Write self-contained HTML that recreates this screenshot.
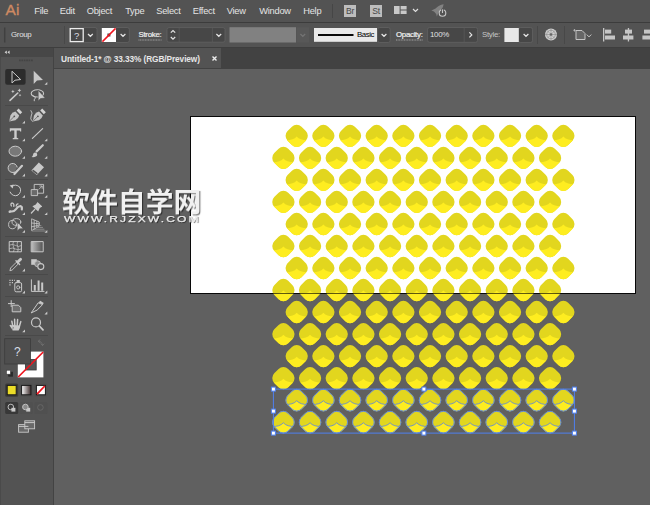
<!DOCTYPE html>
<html lang="en"><head><meta charset="utf-8"><title>Untitled-1* @ 33.33% (RGB/Preview)</title>
<style>
html,body{margin:0;padding:0}
body{width:650px;height:505px;overflow:hidden;background:#606060;position:relative;
 font-family:"Liberation Sans","Noto Sans CJK SC",sans-serif;font-size:9px;color:#dcdcdc;line-height:1}
.abs,#menubar *,#ctrl *,#tabs *,#tools *{position:absolute;box-sizing:border-box}
#menubar{position:absolute;left:0;top:0;width:650px;height:23px;background:#535353;border-bottom:1px solid #3c3c3c;box-sizing:border-box}
#menubar .m{top:7.2px;font-size:9.3px;color:#e4e4e4;white-space:nowrap;letter-spacing:-0.25px;margin-left:-0.8px}
#logo{left:5.6px;top:1.6px;font-size:15.4px;color:#cf8a62;letter-spacing:0.2px;-webkit-text-stroke:0.35px #cf8a62}
.box{background:#bdbdbd;color:#474747;font-size:8.6px;text-align:center;line-height:12px;width:12px;height:12px;letter-spacing:-0.3px}
#ctrl{position:absolute;left:0;top:23px;width:650px;height:25px;background:#535353;border-bottom:1px solid #3e3e3e;box-sizing:border-box}
#ctrl .t{font-size:7.9px;color:#e0e0e0;white-space:nowrap;letter-spacing:-0.3px}
#ctrl .dd{top:5px;height:15px;width:12px;background:#4a4a4a;border:1px solid #5c5c5c;border-radius:2px}
.sep{width:1px;background:#464646}
#tabs{position:absolute;left:0;top:48px;width:650px;height:21px;background:#424242}
#tab{left:54px;top:0;width:167px;height:20px;background:#535353}
#tab span{left:7px;top:7px;font-size:8.3px;letter-spacing:-0.1px;font-weight:bold;color:#e6e6e6;white-space:nowrap}
#tools{position:absolute;left:0;top:48px;width:54px;height:457px;background:#535353;border-right:1.6px solid #434343;border-left:1px solid #4a4a4a;box-sizing:border-box}
#tools .hd{left:-1px;top:0;width:53px;height:9px;background:#474747}
#canvas{position:absolute;left:54px;top:69px;width:596px;height:436px;background:#606060}
#art{position:absolute;left:190px;top:116px;width:446px;height:178px;background:#fff;border:1px solid #1a1a1a;box-sizing:border-box}
#wm{position:absolute;left:61.6px;top:189.8px;font-size:27.9px;font-weight:700;color:#f1f1f1;will-change:transform;white-space:nowrap;letter-spacing:0;text-shadow:1px 1px 1px rgba(0,0,0,.6);line-height:28px;transform-origin:0 0;transform:scale(1,0.97)}
#wm2{will-change:transform;position:absolute;left:64px;top:214.3px;font-size:8.6px;color:#ececec;white-space:nowrap;letter-spacing:1.52px;-webkit-text-stroke:0.25px #ececec;text-shadow:0.7px 1px 0.8px rgba(0,0,0,.6);line-height:10px;transform-origin:0 0;transform:scale(1.4,1)}
svg{position:absolute;left:0;top:0;overflow:visible}
</style></head>
<body>
<div id="canvas"></div>
<div id="art"></div>
<svg id="shapes" width="650" height="505" viewBox="0 0 650 505">
<defs>
<clipPath id="cp"><rect x="-9.9" y="-9.9" width="19.8" height="19.8" rx="6.8" transform="scale(0.995,1) rotate(45)"/></clipPath>
<g id="d">
 <rect x="-9.9" y="-9.9" width="19.8" height="19.8" rx="6.8" transform="scale(0.995,1) rotate(45)" fill="#e2d61e"/>
 <path clip-path="url(#cp)" d="M-12 4.3 Q-3.6 4.7 0 0.6 Q3.6 4.7 12 4.3 L12 12 L-12 12Z" fill="#feed20"/>
</g>
<g id="ds">
 <use href="#d"/>
 <rect x="-9.600" y="-9.600" width="19.200" height="19.200" rx="6.500" transform="scale(0.995,1) rotate(45)" fill="none" stroke="#5583ea" stroke-width="0.900"/>
 <path clip-path="url(#cp)" d="M-12 4.3 Q-3.6 4.7 0 0.6 Q3.6 4.7 12 4.3" fill="none" stroke="#5583ea" stroke-width="0.800"/>
</g>
</defs>
<use href="#d" x="296.70" y="135.85"/>
<use href="#d" x="323.37" y="135.85"/>
<use href="#d" x="350.03" y="135.85"/>
<use href="#d" x="376.70" y="135.85"/>
<use href="#d" x="403.37" y="135.85"/>
<use href="#d" x="430.03" y="135.85"/>
<use href="#d" x="456.70" y="135.85"/>
<use href="#d" x="483.37" y="135.85"/>
<use href="#d" x="510.04" y="135.85"/>
<use href="#d" x="536.70" y="135.85"/>
<use href="#d" x="563.37" y="135.85"/>
<use href="#d" x="283.40" y="157.88"/>
<use href="#d" x="310.07" y="157.88"/>
<use href="#d" x="336.73" y="157.88"/>
<use href="#d" x="363.40" y="157.88"/>
<use href="#d" x="390.07" y="157.88"/>
<use href="#d" x="416.74" y="157.88"/>
<use href="#d" x="443.40" y="157.88"/>
<use href="#d" x="470.07" y="157.88"/>
<use href="#d" x="496.74" y="157.88"/>
<use href="#d" x="523.40" y="157.88"/>
<use href="#d" x="550.07" y="157.88"/>
<use href="#d" x="296.70" y="179.90"/>
<use href="#d" x="323.37" y="179.90"/>
<use href="#d" x="350.03" y="179.90"/>
<use href="#d" x="376.70" y="179.90"/>
<use href="#d" x="403.37" y="179.90"/>
<use href="#d" x="430.03" y="179.90"/>
<use href="#d" x="456.70" y="179.90"/>
<use href="#d" x="483.37" y="179.90"/>
<use href="#d" x="510.04" y="179.90"/>
<use href="#d" x="536.70" y="179.90"/>
<use href="#d" x="563.37" y="179.90"/>
<use href="#d" x="283.40" y="201.92"/>
<use href="#d" x="310.07" y="201.92"/>
<use href="#d" x="336.73" y="201.92"/>
<use href="#d" x="363.40" y="201.92"/>
<use href="#d" x="390.07" y="201.92"/>
<use href="#d" x="416.74" y="201.92"/>
<use href="#d" x="443.40" y="201.92"/>
<use href="#d" x="470.07" y="201.92"/>
<use href="#d" x="496.74" y="201.92"/>
<use href="#d" x="523.40" y="201.92"/>
<use href="#d" x="550.07" y="201.92"/>
<use href="#d" x="296.70" y="223.95"/>
<use href="#d" x="323.37" y="223.95"/>
<use href="#d" x="350.03" y="223.95"/>
<use href="#d" x="376.70" y="223.95"/>
<use href="#d" x="403.37" y="223.95"/>
<use href="#d" x="430.03" y="223.95"/>
<use href="#d" x="456.70" y="223.95"/>
<use href="#d" x="483.37" y="223.95"/>
<use href="#d" x="510.04" y="223.95"/>
<use href="#d" x="536.70" y="223.95"/>
<use href="#d" x="563.37" y="223.95"/>
<use href="#d" x="283.40" y="245.97"/>
<use href="#d" x="310.07" y="245.97"/>
<use href="#d" x="336.73" y="245.97"/>
<use href="#d" x="363.40" y="245.97"/>
<use href="#d" x="390.07" y="245.97"/>
<use href="#d" x="416.74" y="245.97"/>
<use href="#d" x="443.40" y="245.97"/>
<use href="#d" x="470.07" y="245.97"/>
<use href="#d" x="496.74" y="245.97"/>
<use href="#d" x="523.40" y="245.97"/>
<use href="#d" x="550.07" y="245.97"/>
<use href="#d" x="296.70" y="268.00"/>
<use href="#d" x="323.37" y="268.00"/>
<use href="#d" x="350.03" y="268.00"/>
<use href="#d" x="376.70" y="268.00"/>
<use href="#d" x="403.37" y="268.00"/>
<use href="#d" x="430.03" y="268.00"/>
<use href="#d" x="456.70" y="268.00"/>
<use href="#d" x="483.37" y="268.00"/>
<use href="#d" x="510.04" y="268.00"/>
<use href="#d" x="536.70" y="268.00"/>
<use href="#d" x="563.37" y="268.00"/>
<use href="#d" x="283.40" y="290.02"/>
<use href="#d" x="310.07" y="290.02"/>
<use href="#d" x="336.73" y="290.02"/>
<use href="#d" x="363.40" y="290.02"/>
<use href="#d" x="390.07" y="290.02"/>
<use href="#d" x="416.74" y="290.02"/>
<use href="#d" x="443.40" y="290.02"/>
<use href="#d" x="470.07" y="290.02"/>
<use href="#d" x="496.74" y="290.02"/>
<use href="#d" x="523.40" y="290.02"/>
<use href="#d" x="550.07" y="290.02"/>
<use href="#d" x="296.70" y="312.05"/>
<use href="#d" x="323.37" y="312.05"/>
<use href="#d" x="350.03" y="312.05"/>
<use href="#d" x="376.70" y="312.05"/>
<use href="#d" x="403.37" y="312.05"/>
<use href="#d" x="430.03" y="312.05"/>
<use href="#d" x="456.70" y="312.05"/>
<use href="#d" x="483.37" y="312.05"/>
<use href="#d" x="510.04" y="312.05"/>
<use href="#d" x="536.70" y="312.05"/>
<use href="#d" x="563.37" y="312.05"/>
<use href="#d" x="283.40" y="334.07"/>
<use href="#d" x="310.07" y="334.07"/>
<use href="#d" x="336.73" y="334.07"/>
<use href="#d" x="363.40" y="334.07"/>
<use href="#d" x="390.07" y="334.07"/>
<use href="#d" x="416.74" y="334.07"/>
<use href="#d" x="443.40" y="334.07"/>
<use href="#d" x="470.07" y="334.07"/>
<use href="#d" x="496.74" y="334.07"/>
<use href="#d" x="523.40" y="334.07"/>
<use href="#d" x="550.07" y="334.07"/>
<use href="#d" x="296.70" y="356.10"/>
<use href="#d" x="323.37" y="356.10"/>
<use href="#d" x="350.03" y="356.10"/>
<use href="#d" x="376.70" y="356.10"/>
<use href="#d" x="403.37" y="356.10"/>
<use href="#d" x="430.03" y="356.10"/>
<use href="#d" x="456.70" y="356.10"/>
<use href="#d" x="483.37" y="356.10"/>
<use href="#d" x="510.04" y="356.10"/>
<use href="#d" x="536.70" y="356.10"/>
<use href="#d" x="563.37" y="356.10"/>
<use href="#d" x="283.40" y="378.12"/>
<use href="#d" x="310.07" y="378.12"/>
<use href="#d" x="336.73" y="378.12"/>
<use href="#d" x="363.40" y="378.12"/>
<use href="#d" x="390.07" y="378.12"/>
<use href="#d" x="416.74" y="378.12"/>
<use href="#d" x="443.40" y="378.12"/>
<use href="#d" x="470.07" y="378.12"/>
<use href="#d" x="496.74" y="378.12"/>
<use href="#d" x="523.40" y="378.12"/>
<use href="#d" x="550.07" y="378.12"/>
<use href="#ds" x="296.70" y="400.15"/>
<use href="#ds" x="323.37" y="400.15"/>
<use href="#ds" x="350.03" y="400.15"/>
<use href="#ds" x="376.70" y="400.15"/>
<use href="#ds" x="403.37" y="400.15"/>
<use href="#ds" x="430.03" y="400.15"/>
<use href="#ds" x="456.70" y="400.15"/>
<use href="#ds" x="483.37" y="400.15"/>
<use href="#ds" x="510.04" y="400.15"/>
<use href="#ds" x="536.70" y="400.15"/>
<use href="#ds" x="563.37" y="400.15"/>
<use href="#ds" x="283.40" y="422.17"/>
<use href="#ds" x="310.07" y="422.17"/>
<use href="#ds" x="336.73" y="422.17"/>
<use href="#ds" x="363.40" y="422.17"/>
<use href="#ds" x="390.07" y="422.17"/>
<use href="#ds" x="416.74" y="422.17"/>
<use href="#ds" x="443.40" y="422.17"/>
<use href="#ds" x="470.07" y="422.17"/>
<use href="#ds" x="496.74" y="422.17"/>
<use href="#ds" x="523.40" y="422.17"/>
<use href="#ds" x="550.07" y="422.17"/>
<rect x="190.5" y="116.500" width="445" height="177" fill="none" stroke="rgba(0,0,0,0.62)" stroke-width="1"/>
<rect x="273.400" y="389.100" width="301" height="44" fill="none" stroke="#4f80f0" stroke-width="1"/>
<g fill="#fff" stroke="#4f80f0" stroke-width="1">
<rect x="271.400" y="387.100" width="4" height="4"/><rect x="421.900" y="387.100" width="4" height="4"/><rect x="572.400" y="387.100" width="4" height="4"/>
<rect x="271.400" y="409.100" width="4" height="4"/><rect x="572.400" y="409.100" width="4" height="4"/>
<rect x="271.400" y="431.100" width="4" height="4"/><rect x="421.900" y="431.100" width="4" height="4"/><rect x="572.400" y="431.100" width="4" height="4"/>
</g>
</svg>
<div id="wm">软件自学网</div>
<div id="wm2">WWW.RJZXW.COM</div>

<div id="tabs">
 <div id="tab"><span>Untitled-1* @ 33.33% (RGB/Preview)</span>
  <svg style="left:158px;top:8px" width="5" height="5" viewBox="0 0 5 5"><path d="M0.500 0.500L4.500 4.500M4.500 0.500L0.500 4.500" stroke="#ececec" stroke-width="1.400"/></svg>
 </div>
</div>

<div id="tools">
 <div class="hd"></div>
 <svg id="toolsvg" width="54" height="505" viewBox="0 0 54 505" style="left:-1px;top:-48px">
<g fill="none" stroke="#c9c9c9" stroke-width="1.1" stroke-linejoin="round" stroke-linecap="round">
<!-- header chevrons -->
<path d="M6.800 50.400L4.600 52.200L6.800 54ZM9.600 50.400L7.400 52.200L9.600 54Z" fill="#d4d4d4" stroke="none"/>
<!-- grip -->
<path d="M19 60.300H33" stroke="#444" stroke-width="1.800" stroke-dasharray="1.700 0.700" stroke-linecap="butt"/>
<!-- separators -->
<g stroke="#474747" stroke-width="1" stroke-linecap="butt">
<path d="M5 105.500H48M5 179.500H48M5 236.500H48M5 274.500H48M5 296.500H48M5 335.500H48" stroke="#494949"/>
</g>
<!-- selected tool bg -->
<rect x="5.2" y="69" width="20.4" height="15.8" rx="2" fill="#2c2c2c" stroke="none"/>
<!-- selection arrow -->
<path d="M12 71.600V83L15 80.200L20.300 79.600Z" stroke-width="1"/>
<!-- direct selection -->
<path d="M33.700 70.800V84L37 80.600L43 80Z" fill="#c9c9c9" stroke="none"/>
<!-- flyout triangles -->
<g fill="#c9c9c9" stroke="none">
<path d="M47.3 82V84.8H44.5Z"/>
<path d="M25 120.8V123.6H22.2Z"/>
<path d="M25 138.4V141.2H22.2Z"/><path d="M47.3 138.4V141.2H44.5Z"/>
<path d="M25 156V158.8H22.2Z"/><path d="M47.3 156V158.8H44.5Z"/>
<path d="M25 173.6V176.4H22.2Z"/><path d="M47.3 173.6V176.4H44.5Z"/>
<path d="M25 195V197.8H22.2Z"/><path d="M47.3 195V197.8H44.5Z"/>
<path d="M25 212.2V215H22.2Z"/><path d="M47.3 212.2V215H44.5Z"/>
<path d="M25 230V232.8H22.2Z"/><path d="M47.3 230V232.8H44.5Z"/>
<path d="M25 268.6V271.4H22.2Z"/>
<path d="M25 290.6V293.4H22.2Z"/><path d="M47.3 290.6V293.4H44.5Z"/>
<path d="M47.3 311.6V314.4H44.5Z"/>
<path d="M25 329.4V332.2H22.2Z"/>
</g>
<!-- magic wand -->
<path d="M10 100.400L17.800 93" stroke-width="1.600"/>
<path d="M12.900 89.800L13.500 91L14.700 91.500L13.500 92L12.900 93.200L12.300 92L11.100 91.500L12.300 91ZM19.400 88.400L20 89.700L21.300 90.300L20 90.900L19.400 92.200L18.800 90.900L17.500 90.300L18.800 89.700ZM20 93.900L20.500 94.800L21.400 95.200L20.500 95.600L20 96.500L19.500 95.600L18.600 95.200L19.500 94.800Z" fill="#c9c9c9" stroke="none"/>
<!-- lasso -->
<ellipse cx="37.400" cy="93.400" rx="6.200" ry="3.600" stroke-width="1.100"/>
<path d="M33.200 95.800Q36.400 97 35.200 98.600Q33.600 99 34.200 100.800" stroke-width="1"/>
<path d="M38.200 90.600V101L40.500 98.600L45 98Z" fill="#cbcbcb" stroke="#535353" stroke-width="0.600"/>
<!-- pen -->
<g id="pen">
<path d="M9.200 121.400L10.400 115.400Q12 112.400 15.400 111.600L19.200 115.400Q18.400 118.600 15.400 120.200Z" fill="#c4c4c4" stroke="none"/>
<path d="M9.800 120.800L13.800 116.800" stroke="#535353" stroke-width="0.700"/>
<circle cx="14.300" cy="116.300" r="0.900" fill="#535353" stroke="none"/>
<path d="M16.600 110.400L18.600 108.600L22.200 112.200L20.200 114.200Z" fill="#d2d2d2" stroke="none"/>
</g>
<use href="#pen" x="23.600" y="0"/>
<path d="M31 110.600Q33.200 113 31.200 116Q29.600 119 32.400 121.400" stroke-width="0.900"/>
<!-- type -->
<path d="M9.800 128.200H21.200V131.600H20.200L19.800 130.400H16.700V137.800L18.300 138.200V139.300H12.700V138.200L14.300 137.800V130.400H11.200L10.800 131.600H9.800Z" fill="#cdcdcd" stroke="none"/>
<!-- line -->
<path d="M32.4 138.4L42.6 128.6" stroke-width="1.2"/>
<!-- ellipse -->
<ellipse cx="15.3" cy="151.2" rx="6.3" ry="5" fill="#787878" stroke-width="1"/>
<!-- brush -->
<path d="M36.600 151.400L42.800 145.200" stroke-width="2.200"/>
<path d="M31.600 157Q33 156.200 33.400 153.600Q34.800 151.600 36.800 153.200Q38 155.400 35.800 156.600Q33.800 157.400 31.600 157Z" fill="#c9c9c9" stroke="none"/>
<!-- shaper -->
<path d="M14.6 172.2A4.6 4.6 0 1 1 17.2 167" stroke-width="1" fill="#6e6e6e"/>
<path d="M14.4 174L22 165.8" stroke-width="2.2"/>
<!-- eraser -->
<path d="M31.400 170.600L38.800 162.600L44 167.200L36.800 175Z" fill="#c9c9c9" stroke="none"/>
<path d="M33.200 170.600L36.800 173.400" stroke="#535353" stroke-width="1.600"/>
<!-- rotate -->
<path d="M11.4 186.6A5.4 5.4 0 1 1 10.2 192.2" stroke-width="1" stroke-dasharray="9 0" />
<path d="M9.6 185.4L13.6 184.4L12.8 188.6Z" fill="#c9c9c9" stroke="none"/>
<!-- scale -->
<rect x="34.6" y="184.4" width="9" height="8.8" stroke-width="0.9"/>
<rect x="31.6" y="189.6" width="6" height="6" stroke-width="0.9" fill="#6a6a6a"/>
<path d="M39 189.2L42 186.2M42.2 188.4V186H39.8" stroke-width="0.8"/>
<!-- width -->
<path d="M10.600 211.400Q14 212 16 209.200Q18 206.200 20.400 206Q22.400 206.600 21.800 209.400" stroke-width="2.200"/><circle cx="9.700" cy="211.700" r="1.200" fill="#c9c9c9" stroke="none"/>
<path d="M11.400 206Q10 203.200 12.400 203Q14.400 203.600 13.800 206.400M16.200 206Q16.400 203.800 18 203.800" stroke-width="1.300"/>
<!-- pin -->
<g transform="translate(0,0.8)"><path d="M37.200 201.800L41.800 206L39.800 207.200L38.200 210.800L32.400 205.400L35.800 203.800Z" fill="#c9c9c9" stroke="none"/>
<path d="M37.600 202.200L41.400 205.600" stroke-width="1.200"/>
<path d="M34.800 208.600L31.400 212.200" stroke-width="1.300"/></g>
<!-- shape builder -->
<ellipse cx="12.6" cy="224.6" rx="4" ry="4.2" stroke-width="0.9"/>
<ellipse cx="16.4" cy="222" rx="4.4" ry="3.4" stroke-width="0.9"/>
<path d="M17.4 222.6V230.8L19.4 228.8L23 228.4Z" fill="#c9c9c9" stroke="#535353" stroke-width="0.4"/>
<!-- perspective grid -->
<path d="M31.6 219.2V230.6L39.2 226.2V222.4ZM34.2 220.4V229.2M36.8 221.4V227.6M31.6 223L39.2 223.8M31.6 226.8L39.2 225.2" stroke-width="0.8"/>
<path d="M38 225.6H41M36.4 227.4H42.6M34.4 229.2H44M32.4 231H45.4" stroke-width="0.8" stroke="#9a9a9a"/>
<!-- mesh -->
<rect x="9.6" y="241.6" width="11.8" height="10.2" stroke-width="1"/>
<path d="M9.6 245Q13 243.6 15.4 245.4Q18.4 247.6 21.4 245.6M9.6 248.6Q13 247.2 15.4 249Q18.4 250.6 21.4 249M13.4 241.6Q12 245 13.6 247Q15 249.6 13.4 251.8M17.6 241.6Q16.4 244.4 17.8 246.4Q19 249.4 17.6 251.8" stroke-width="0.7"/>
<!-- gradient -->
<rect x="31.6" y="241.6" width="11.6" height="10.2" fill="url(#gr1)" stroke-width="1"/>
<!-- eyedropper -->
<path d="M10 270.4L10.6 268L16.4 262.2L18.2 264L12.4 269.8Z" stroke-width="0.9"/>
<path d="M16 260.8L19.600 264.4" stroke-width="1.4"/>
<path d="M18 261.800L20.6 259.2" stroke-width="2.8"/>
<!-- blend -->
<rect x="31.2" y="259.200" width="5.6" height="5.6" fill="#c9c9c9" stroke="none"/>
<circle cx="37.6" cy="263.8" r="3" fill="#8a8a8a" stroke-width="0.8"/>
<circle cx="40.8" cy="266.600" r="3" fill="#535353" stroke-width="1.1"/>
<!-- symbol sprayer -->
<rect x="14.8" y="282.6" width="6.8" height="9.2" rx="1.4" stroke-width="1"/>
<rect x="16.6" y="280" width="3.200" height="2.4" fill="#c9c9c9" stroke="none"/>
<circle cx="18.2" cy="287.400" r="1.6" stroke-width="0.9"/>
<path d="M9.4 280.4H10.6M11.8 280.4H13M9.4 282.6H10.6M11.8 282.6H13M9.4 284.8H10.6M14 280.4H14.800" stroke-width="1.2" stroke-linecap="butt"/>
<!-- graph -->
<path d="M31.4 279.8V291.4H44" stroke-width="1"/>
<path d="M34.800 290.8V285M38.6 290.8V280.6M42.2 290.8V282.6" stroke-width="2" stroke-linecap="butt"/>
<!-- artboard -->
<path d="M12.6 305.2H18.400L20.8 307.6V311.800H12.6Z" fill="#6e6e6e" stroke-width="1"/>
<path d="M8.400 303.6H14.400M11.2 300.6V306.600" stroke-width="1"/>
<!-- slice -->
<path d="M31.4 312.6L38.200 302.8L42.600 304.600L37.400 309.800Z" stroke-width="1"/>
<path d="M38.6 302.4L40.200 300.8L43.8 303L42.600 304.6Z" fill="#c9c9c9" stroke="none"/>
<!-- hand -->
<path d="M12.600 330.600Q11.400 327.800 9.400 325.400Q10.400 324.200 12 325.600L13.600 327.400ZM12.600 330.600H18.600Q20.400 327.600 20.200 325.400L13 325Z" fill="#c9c9c9" stroke="none"/><path d="M12.800 326L11.800 321.200M14.800 325.400L14.600 319.200M17.200 325.400L17.600 319.600M19.400 326.200L20.800 321.600" stroke-width="1.500"/>
<!-- zoom -->
<circle cx="36" cy="322.4" r="4.5" stroke-width="1.2"/>
<path d="M39.400 326L43 329.800" stroke-width="1.8"/>
<!-- swap -->
<path d="M38.400 341.200Q41.800 340.800 42.600 345.400M38.400 341.200L40 339.800M38.400 341.200L40 342.800M42.600 345.400L41 344M42.600 345.400L44 344" stroke="#6e6e6e" stroke-width="0.9"/>
</g>
<defs>
<linearGradient id="gr1" x1="0" x2="1" y1="0" y2="0"><stop offset="0" stop-color="#bdbdbd"/><stop offset="1" stop-color="#505050"/></linearGradient>
<linearGradient id="gr2" x1="0" x2="1" y1="0" y2="0"><stop offset="0" stop-color="#ffffff"/><stop offset="1" stop-color="#3a2a2a"/></linearGradient>
</defs>
<!-- stroke box -->
<rect x="17.8" y="351.600" width="25.6" height="25.8" fill="#fff"/>
<rect x="25.400" y="359.400" width="10.800" height="10.600" fill="#555" stroke="#3a3a3a" stroke-width="0.800"/>
<path d="M18.200 377L43.200 352" stroke="#f0141e" stroke-width="1.700"/>
<!-- fill box -->
<rect x="4.700" y="338.700" width="25.800" height="25.300" fill="#4e4e4e" stroke="#3c3c3c" stroke-width="0.8"/>
<text x="17.300" y="356.400" font-family="Liberation Sans, sans-serif" font-size="12" fill="#d6dde6" text-anchor="middle">?</text>
<!-- default colors -->
<rect x="8.6" y="372.200" width="4" height="4" fill="#2a2a2a" stroke="#2a2a2a" stroke-width="0.8"/>
<rect x="6.4" y="370.200" width="4" height="4" fill="#fff" stroke="#3a3a3a" stroke-width="0.6"/>
<!-- color mode buttons -->
<rect x="5.2" y="383.400" width="13" height="13.400" rx="1.5" fill="#3a3a3a"/>
<rect x="19.800" y="383.400" width="13" height="13.400" rx="1.5" fill="#505050"/>
<rect x="34.400" y="383.400" width="13" height="13.400" rx="1.5" fill="#505050"/>
<rect x="7.200" y="385.400" width="9" height="9.400" fill="#ebdc28" stroke="#1a1a1a" stroke-width="1"/>
<rect x="21.600" y="385.400" width="9.400" height="9.400" fill="url(#gr2)" stroke="#1a1a1a" stroke-width="1"/>
<rect x="36.400" y="385.400" width="9" height="9.400" fill="#fff" stroke="#1a1a1a" stroke-width="1"/>
<path d="M37 394.200L44.800 386" stroke="#f0141e" stroke-width="1.8"/>
<!-- draw modes -->
<rect x="5.2" y="402" width="13" height="12" rx="1.5" fill="#383838"/>
<rect x="19.800" y="402" width="13" height="12" rx="1.5" fill="#505050"/>
<rect x="34.400" y="402" width="13" height="12" rx="1.5" fill="#505050"/>
<circle cx="10.800" cy="407" r="2.800" fill="none" stroke="#c9c9c9" stroke-width="0.9"/>
<rect x="11.400" y="407.800" width="4" height="3.800" fill="#c9c9c9"/>
<rect x="26.200" y="407.800" width="4" height="3.800" fill="#c9c9c9"/>
<circle cx="25.400" cy="407" r="2.800" fill="#8a8a8a" stroke="#c9c9c9" stroke-width="0.9"/>
<circle cx="40.400" cy="407.400" r="2.800" fill="none" stroke="#686868" stroke-width="0.9"/>
<!-- screen mode -->
<rect x="18.600" y="424.600" width="9.800" height="7.600" fill="#6a6a6a" stroke="#c9c9c9" stroke-width="0.900"/>
<rect x="24.800" y="420.800" width="9.800" height="8" fill="#6a6a6a" stroke="#c9c9c9" stroke-width="0.900"/>
<path d="M24.800 422.600H34.600M18.600 426.400H28.400" stroke="#c9c9c9" stroke-width="1"/>
</svg>

</div>

<div id="menubar">
 <div id="logo">Ai</div>
 <div class="m" style="left:35px">File</div>
 <div class="m" style="left:60.5px">Edit</div>
 <div class="m" style="left:87.5px">Object</div>
 <div class="m" style="left:126px">Type</div>
 <div class="m" style="left:157px">Select</div>
 <div class="m" style="left:193.5px">Effect</div>
 <div class="m" style="left:227.5px">View</div>
 <div class="m" style="left:260px">Window</div>
 <div class="m" style="left:304px">Help</div>
 <div class="sep" style="left:332px;top:4px;height:14px"></div>
 <div class="box" style="left:344px;top:5px">Br</div>
 <div class="box" style="left:370px;top:5px">St</div>
 <svg width="650" height="23" viewBox="0 0 650 23">
  <g fill="#c8c8c8">
   <rect x="394" y="6" width="5.6" height="8"/><rect x="400.6" y="6" width="6" height="3.5"/><rect x="400.6" y="10.5" width="6" height="3.5"/>
  </g>
  <path d="M413 9L415.5 11.400L418 9" fill="none" stroke="#e0e0e0" stroke-width="1.2"/>
  <path d="M443.600 4.300Q438.600 5 435.600 8.600L431.400 10.400L434 11.600L436.200 14L436.800 16.400L438.600 12.600Q442.800 9.600 443.600 4.300Z" fill="#828282"/>
  <circle cx="442.5" cy="13" r="3.300" fill="#535353" stroke="#c8c8c8" stroke-width="1.100"/>
  <path d="M442.500 8.800V13" stroke="#535353" stroke-width="2.600"/>
  <path d="M442.500 9.400V13" stroke="#c8c8c8" stroke-width="1.100"/>
 </svg>
</div>

<div id="ctrl">
 <div class="t" style="left:11px;top:8px">Group</div>
 <div class="t" style="left:138.500px;top:8px;color:#f0f0f0;-webkit-text-stroke:0.2px #f0f0f0">Stroke:</div>
 <div class="t" style="left:396px;top:8px;color:#f0f0f0;-webkit-text-stroke:0.2px #f0f0f0">Opacity:</div>
 <div class="t" style="left:482px;top:8px;color:#c4c4c4">Style:</div>
 <div class="t" style="left:430px;top:8px;z-index:2">100%</div>
 <div class="t" style="left:357px;top:8px;color:#000;z-index:2;letter-spacing:-0.45px">Basic</div>
 <div class="t" style="left:74px;top:8px;font-size:9.5px;z-index:2;color:#dcdfe6">?</div>
 <svg width="650" height="25" viewBox="0 23 650 25">
  <path d="M4.700 27.500V42.500" stroke="#404040" stroke-width="1.500"/>
  <path d="M64.500 26V44M537.500 26V44M564.500 26V44" stroke="#484848" stroke-width="1"/>
  <!-- fill -->
  <rect x="83" y="27.500" width="14" height="15" rx="2" fill="#474747" stroke="#626262" stroke-width="0.800"/>
  <rect x="70.200" y="28.600" width="13" height="13" fill="#484848" stroke="#ececec" stroke-width="1.300"/>
  <rect x="115" y="27.500" width="14.300" height="15" rx="2" fill="#474747" stroke="#626262" stroke-width="0.800"/>
  <rect x="101.800" y="28" width="14.200" height="14" fill="#fff"/>
  <rect x="107.400" y="33.500" width="3" height="3" fill="#444"/>
  <path d="M102.400 41.600L115.600 28.400" stroke="#f0141e" stroke-width="1.500"/>
  <!-- stroke spinner/input/dd -->
  <rect x="167" y="27.600" width="58" height="14.600" rx="2" fill="#474747" stroke="#626262" stroke-width="0.800"/>
  <path d="M179.200 27.600V42.200M212.400 27.600V42.200" stroke="#5c5c5c" stroke-width="0.700"/>
  <!-- profile -->
  <rect x="229.500" y="27.200" width="66.500" height="15.300" fill="#818181"/>
  <rect x="296.500" y="27.200" width="12.500" height="15.300" fill="#585858"/>
  <!-- brush -->
  <rect x="314" y="28" width="63" height="13.800" fill="#e9e9e9"/>
  <path d="M318 35H353.500" stroke="#0a0a0a" stroke-width="1.800"/>
  <rect x="377.600" y="27.500" width="12.600" height="15" rx="2" fill="#474747" stroke="#626262" stroke-width="0.800"/>
  <!-- opacity -->
  <rect x="427.600" y="27.500" width="50" height="14.800" rx="2" fill="#474747" stroke="#626262" stroke-width="0.800"/>
  <path d="M464.200 27.500V42.300" stroke="#5c5c5c" stroke-width="0.700"/>
  <!-- style -->
  <rect x="518.500" y="27.500" width="14" height="15" rx="2" fill="#474747" stroke="#626262" stroke-width="0.800"/>
  <rect x="504.400" y="28" width="14.400" height="14" fill="#e8e8e8"/>
  <!-- chevrons -->
  <g fill="none" stroke="#e4e4e4" stroke-width="1.200">
   <path d="M88 34L90.400 36.300L92.800 34M120.600 34L123 36.300L125.400 34M216.400 34L218.800 36.300L221.200 34M381.600 34L384 36.300L386.400 34M523.600 34L526 36.300L528.400 34"/>
   <path d="M170.800 32.600L173 30.500L175.200 32.600M170.800 37L173 39.100L175.200 37"/>
   <path d="M469.400 32.400L471.800 34.900L469.400 37.400"/>
  </g>
  <path d="M300.400 34L302.800 36.300L305.200 34" fill="none" stroke="#747474" stroke-width="1.200"/>
  <path d="M586.600 34.600L589 36.800L591.400 34.600" fill="none" stroke="#c0c0c0" stroke-width="1"/>
  <!-- underlines -->
  <path d="M138.500 40H161.500M396 40H423" stroke="#b8b8b8" stroke-width="0.800" stroke-dasharray="1 0.600"/>
  <!-- recolor wheel -->
  <circle cx="551" cy="34.500" r="6" fill="#d0d0d0"/>
  <circle cx="551" cy="34.500" r="4.300" fill="none" stroke="#8a8a8a" stroke-width="0.700"/>
  <path d="M551 28.500V40.500M545 34.500H557M546.800 30.300L555.200 38.700M555.200 30.300L546.800 38.700" stroke="#8a8a8a" stroke-width="0.600"/>
  <circle cx="551" cy="34.500" r="1.300" fill="#666"/>
  <!-- doc setup -->
  <path d="M576 30.500H582L585 33.500V39.500H576Z" fill="#666" stroke="#c4c4c4" stroke-width="1"/>
  <path d="M574.500 29V31.600M573.200 30.300H575.800" stroke="#c4c4c4" stroke-width="0.700"/>
  <!-- align -->
  <g fill="#c6c6c6">
   <rect x="603" y="28" width="1.300" height="13.500"/><rect x="605" y="29.600" width="6.200" height="4"/><rect x="605" y="35.500" width="10" height="4"/>
   <rect x="627.800" y="28" width="1.300" height="13.500"/><rect x="625" y="29.600" width="7" height="4"/><rect x="623" y="35.500" width="10.400" height="4"/>
   <rect x="644" y="29.600" width="6" height="4"/><rect x="642.400" y="35.500" width="7.600" height="4"/>
  </g>
 </svg>
</div>
</body></html>
